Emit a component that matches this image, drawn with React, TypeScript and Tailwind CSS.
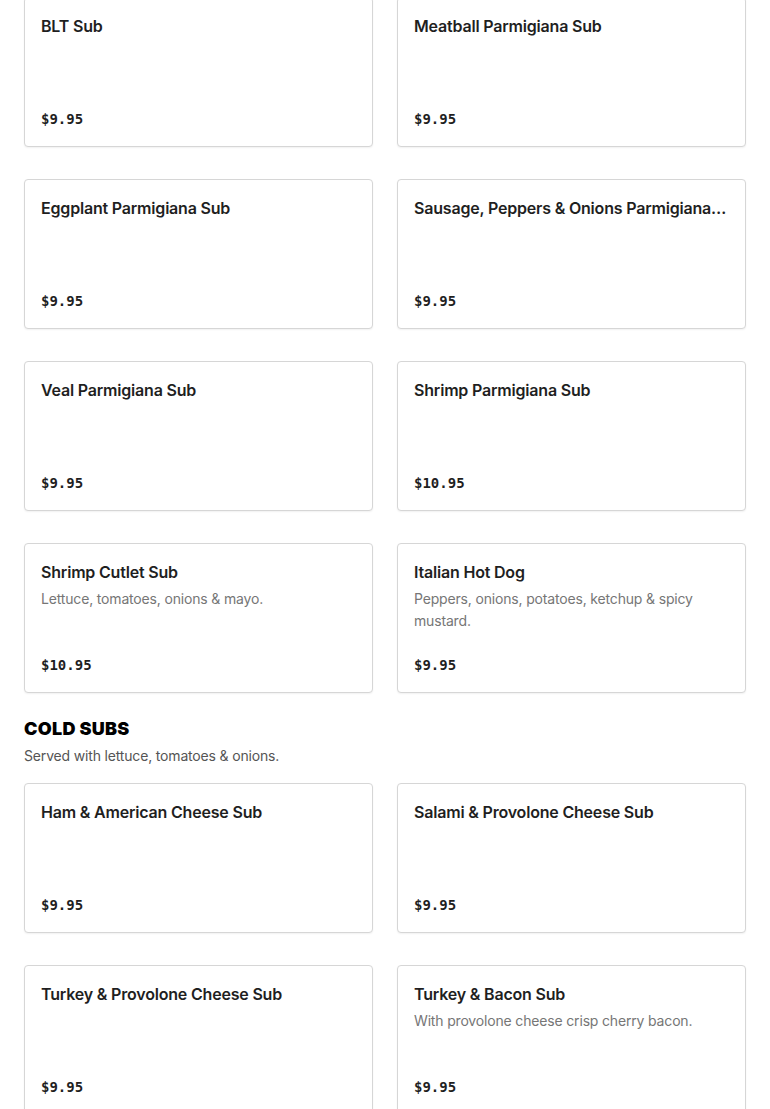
import React from "react";

type Item = { name: string; desc?: string; price: string };

const hot: Item[] = [
  { name: "BLT Sub", price: "$9.95" },
  { name: "Meatball Parmigiana Sub", price: "$9.95" },
  { name: "Eggplant Parmigiana Sub", price: "$9.95" },
  { name: "Sausage, Peppers & Onions Parmigiana Sub", price: "$9.95" },
  { name: "Veal Parmigiana Sub", price: "$9.95" },
  { name: "Shrimp Parmigiana Sub", price: "$10.95" },
  { name: "Shrimp Cutlet Sub", desc: "Lettuce, tomatoes, onions & mayo.", price: "$10.95" },
  { name: "Italian Hot Dog", desc: "Peppers, onions, potatoes, ketchup & spicy mustard.", price: "$9.95" },
];

const cold: Item[] = [
  { name: "Ham & American Cheese Sub", price: "$9.95" },
  { name: "Salami & Provolone Cheese Sub", price: "$9.95" },
  { name: "Turkey & Provolone Cheese Sub", price: "$9.95" },
  { name: "Turkey & Bacon Sub", desc: "With provolone cheese crisp cherry bacon.", price: "$9.95" },
];

function Card({ item }: { item: Item }) {
  return (
    <div className="flex min-h-[150px] flex-col justify-between rounded-[4px] border border-[#d6d6d6] bg-white px-4 pt-4 pb-[15px] shadow-[0_1px_2px_rgba(0,0,0,0.06)]">
      <div className="min-w-0">
        <div className="truncate font-['Inter',sans-serif] text-[16px] font-semibold leading-6 tracking-[-0.012em] text-[#1f1f1f]">
          {item.name}
        </div>
        {item.desc && (
          <div className="mt-1 font-['Inter',sans-serif] text-[14px] leading-[22px] tracking-[-0.012em] text-[#767676]">
            {item.desc}
          </div>
        )}
      </div>
      <div className="mt-4 font-['DejaVu_Sans_Mono',monospace] text-[14px] font-bold leading-6 text-[#1f1f1f]">
        {item.price}
      </div>
    </div>
  );
}

export default function App() {
  return (
    <div className="min-h-screen bg-white px-6 font-['Inter',sans-serif]">
      <div className="-mt-[3px] grid grid-cols-2 gap-x-6 gap-y-8">
        {hot.map((it) => (
          <Card key={it.name} item={it} />
        ))}
      </div>
      <h2 className="mt-6 font-['Inter',sans-serif] text-[18px] font-black uppercase leading-6 tracking-[0.015em] text-black">
        Cold Subs
      </h2>
      <p className="mt-1 text-[14px] leading-[22px] tracking-[-0.012em] text-[#555555]">
        Served with lettuce, tomatoes &amp; onions.
      </p>
      <div className="mt-4 grid grid-cols-2 gap-x-6 gap-y-8 pb-8">
        {cold.map((it) => (
          <Card key={it.name} item={it} />
        ))}
      </div>
    </div>
  );
}
